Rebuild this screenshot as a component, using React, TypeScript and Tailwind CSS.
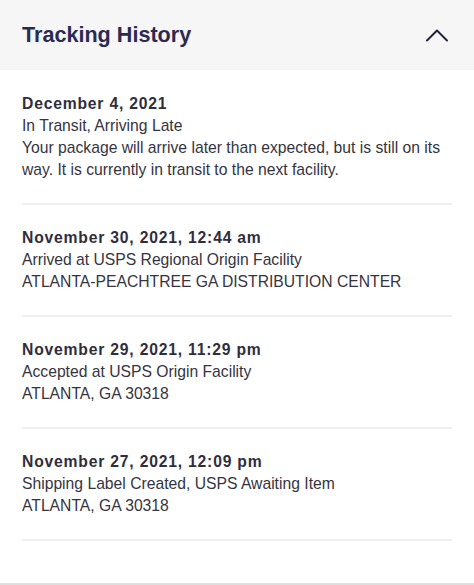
import React from 'react';

type Event = {
  date: string;
  lines: string[];
};

const events: Event[] = [
  {
    date: 'December 4, 2021',
    lines: [
      'In Transit, Arriving Late',
      'Your package will arrive later than expected, but is still on its way. It is currently in transit to the next facility.',
    ],
  },
  {
    date: 'November 30, 2021, 12:44 am',
    lines: ['Arrived at USPS Regional Origin Facility', 'ATLANTA-PEACHTREE GA DISTRIBUTION CENTER'],
  },
  {
    date: 'November 29, 2021, 11:29 pm',
    lines: ['Accepted at USPS Origin Facility', 'ATLANTA, GA 30318'],
  },
  {
    date: 'November 27, 2021, 12:09 pm',
    lines: ['Shipping Label Created, USPS Awaiting Item', 'ATLANTA, GA 30318'],
  },
];

const App: React.FC = () => {
  return (
    <div className="w-[474px] h-[585px] bg-white overflow-hidden font-['Liberation_Sans',Arial,sans-serif]">
      {/* Header */}
      <div className="h-[70px] bg-[#f6f6f7] flex items-center justify-between pl-[22px] pr-[24px]">
        <h2 className="text-[21.6px] font-bold text-[#2b2a52]">Tracking History</h2>
        <svg width="24" height="14" viewBox="0 0 24 14" fill="none" className="mr-[1px]">
          <path d="M2 12.5 L12 2.5 L22 12.5" stroke="#24233d" strokeWidth="2" strokeLinecap="round" strokeLinejoin="round" />
        </svg>
      </div>

      {/* Events */}
      <div className="px-[22px] pt-[23px] border-b-2 border-[#dedede] h-[515px]">
        {events.map((ev) => (
          <div key={ev.date} className="border-b-2 border-[#efefef] pb-[22px] mb-[22px] text-[15.7px] leading-[22px]">
            <div className="font-bold text-[#2f2e3c] tracking-[0.8px]">{ev.date}</div>
            {ev.lines.map((l) => (
              <div key={l} className="text-[#35343f]">
                {l}
              </div>
            ))}
          </div>
        ))}
      </div>
    </div>
  );
};

export default App;
